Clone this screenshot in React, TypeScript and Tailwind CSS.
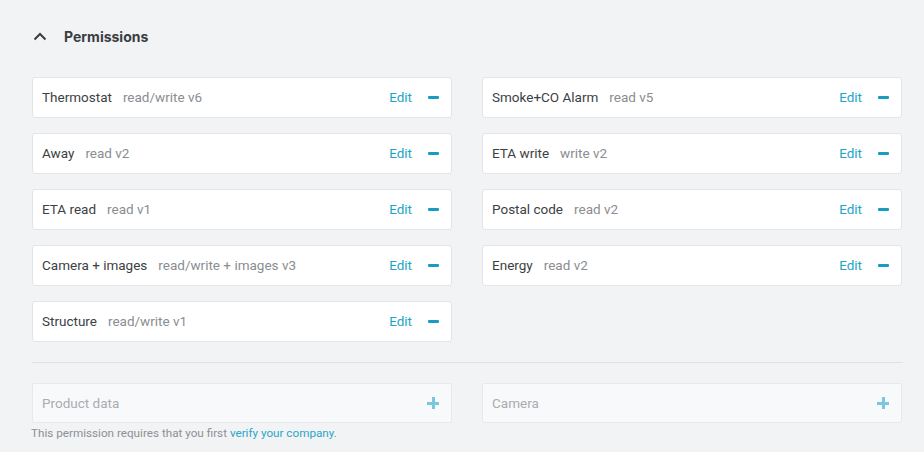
import React from "react";

type Perm = { name: string; detail: string };

const left: Perm[] = [
  { name: "Thermostat", detail: "read/write v6" },
  { name: "Away", detail: "read v2" },
  { name: "ETA read", detail: "read v1" },
  { name: "Camera + images", detail: "read/write + images v3" },
  { name: "Structure", detail: "read/write v1" },
];
const right: Perm[] = [
  { name: "Smoke+CO Alarm", detail: "read v5" },
  { name: "ETA write", detail: "write v2" },
  { name: "Postal code", detail: "read v2" },
  { name: "Energy", detail: "read v2" },
];

function Card({ p }: { p: Perm }) {
  return (
    <div className="h-[41px] bg-white border border-[#e2e4e7] rounded-[3px] flex items-center pl-[9px] pr-[12px]">
      <span className="text-[#3c3f43]">{p.name}</span>
      <span className="text-[#8a8d91] ml-[11px]">{p.detail}</span>
      <span className="ml-auto text-[#1ea5c6]">Edit</span>
      <span className="ml-[16px] w-[11px] h-[3px] rounded-[1px] bg-[#1a9cc1]" />
    </div>
  );
}

function Disabled({ name }: { name: string }) {
  return (
    <div className="h-[40px] bg-[#f8f9fa] border border-[#e7e9ec] rounded-[2px] flex items-center pl-[9px] pr-[12px]">
      <span className="text-[#a9acb0]">{name}</span>
      <span className="ml-auto relative w-[12px] h-[12px]">
        <span className="absolute left-0 top-[4.5px] w-[12px] h-[3px] bg-[#7cc7e0]" />
        <span className="absolute top-0 left-[4.5px] w-[3px] h-[12px] bg-[#7cc7e0]" />
      </span>
    </div>
  );
}

export default function App() {
  return (
    <div
      className="w-[924px] h-[452px] bg-[#f2f3f5] pl-[32px] pr-[21px] pt-[27px] text-[13.5px]"
      style={{ fontFamily: "Roboto, 'Liberation Sans', sans-serif" }}
    >
      <div className="flex items-center h-[19px]">
        <svg width="14" height="10" viewBox="0 0 14 10" className="ml-[1px]">
          <path d="M1.5 7.5 L7 2 L12.5 7.5" fill="none" stroke="#3a3d41" strokeWidth="2" />
        </svg>
        <span className="ml-[17px] font-bold text-[14px] text-[#3a3d41]" style={{ fontFamily: "Inter, Roboto, sans-serif" }}>
          Permissions
        </span>
      </div>
      <div className="mt-[31px] grid grid-cols-2 gap-x-[30px] w-[870px]">
        <div className="flex flex-col gap-[15px]">
          {left.map((p) => (
            <Card key={p.name} p={p} />
          ))}
        </div>
        <div className="flex flex-col gap-[15px]">
          {right.map((p) => (
            <Card key={p.name} p={p} />
          ))}
        </div>
      </div>
      <div className="mt-[20px] h-px bg-[#dfe1e4] w-[871px]" />
      <div className="mt-[20px] grid grid-cols-2 gap-x-[30px] w-[870px]">
        <div>
          <Disabled name="Product data" />
          <div className="mt-[2px] text-[11.7px] text-[#8d9094] -ml-[1px] whitespace-nowrap">
            This permission requires that you first <span className="text-[#2aa6c8]">verify your company</span>.
          </div>
        </div>
        <div>
          <Disabled name="Camera" />
        </div>
      </div>
    </div>
  );
}
